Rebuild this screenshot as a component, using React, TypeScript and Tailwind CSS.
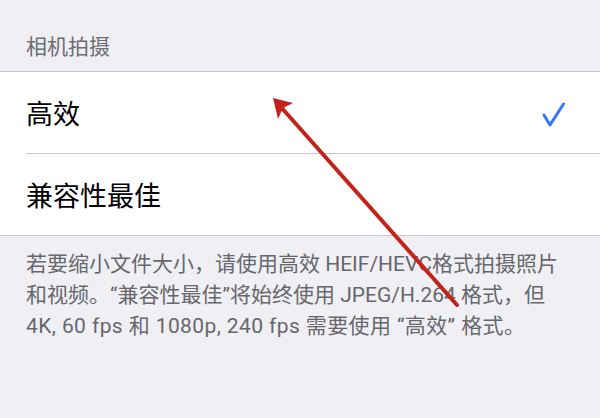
export default function App() {
  const font = { fontFamily: 'Roboto, "Noto Sans CJK SC", sans-serif' };
  return (
    <div className="relative w-[600px] h-[418px] overflow-hidden bg-[#efeff4]" style={font}>
      <div className="flex items-end h-[71px] pl-[26px] pb-[11px]">
        <span className="text-[21px] leading-[26px] text-[#6d6d72]">相机拍摄</span>
      </div>

      <div className="bg-white border-y border-[#c8c7cc]">
        <div className="flex items-center justify-between h-[81px] pl-[26px] pr-[33px] pt-[5px]">
          <span className="text-[27px] text-black">高效</span>
          <svg width="26" height="26" viewBox="0 0 26 26" fill="none">
            <path d="M3 13 L9 23 L22.5 2" stroke="#3478f6" strokeWidth="3" strokeLinecap="round" strokeLinejoin="round" />
          </svg>
        </div>
        <div className="ml-[26px] h-px bg-[#c8c7cc]" />
        <div className="flex items-center h-[81px] pl-[26px] pt-[5px]">
          <span className="text-[27px] text-black">兼容性最佳</span>
        </div>
      </div>

      <div className="pl-[26px] pt-[13px] text-[21px] leading-[31px] text-[#67676c] whitespace-nowrap">
        若要缩小文件大小，请使用高效 HEIF/HEVC格式拍摄照片
        <br />
        和视频。“兼容性最佳”将始终使用 JPEG/H.264 格式，但
        <br />
        <span className="tracking-[0.4px]">4K, 60 fps 和 1080p, 240 fps 需要使用 “高效” 格式。</span>
      </div>

      <svg className="absolute inset-0 pointer-events-none" width="600" height="418" viewBox="0 0 600 418">
        <line x1="457" y1="305" x2="280" y2="106" stroke="#c4221b" strokeWidth="4" strokeLinecap="round" />
        <polygon points="273,98 293,103 283,108 278,119" fill="#c4221b" />
      </svg>
    </div>
  );
}
